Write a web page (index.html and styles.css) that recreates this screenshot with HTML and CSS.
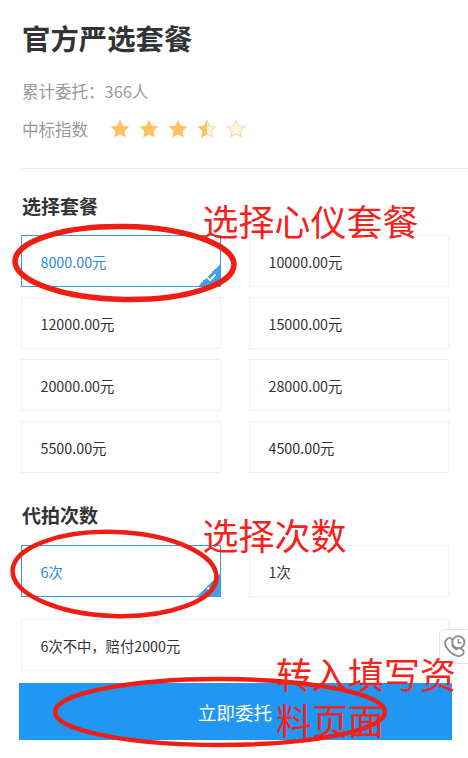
FILE: index.html
```html
<!DOCTYPE html>
<html lang="zh">
<head>
<meta charset="utf-8">
<title>官方严选套餐</title>
<link rel="stylesheet" href="styles.css">
</head>
<body>
<main class="page">
  <h1 class="title">官方严选套餐</h1>
  <p class="meta">累计委托：366人</p>
  <div class="rating">
    <span class="meta-label">中标指数</span>
    <span class="stars">
      <svg class="star" viewBox="0 0 20 20"><path class="star-full" d="M10 .8l2.9 6 6.4.8-4.7 4.5 1.2 6.5L10 15.4l-5.8 3.2 1.2-6.5L.7 7.6l6.4-.8z"/></svg>
      <svg class="star" viewBox="0 0 20 20"><path class="star-full" d="M10 .8l2.9 6 6.4.8-4.7 4.5 1.2 6.5L10 15.4l-5.8 3.2 1.2-6.5L.7 7.6l6.4-.8z"/></svg>
      <svg class="star" viewBox="0 0 20 20"><path class="star-full" d="M10 .8l2.9 6 6.4.8-4.7 4.5 1.2 6.5L10 15.4l-5.8 3.2 1.2-6.5L.7 7.6l6.4-.8z"/></svg>
      <svg class="star" viewBox="0 0 20 20"><path class="star-empty" d="M10 1.8l2.6 5.4 5.7.7-4.2 4 1.1 5.8L10 14.9l-5.2 2.8 1.1-5.8-4.2-4 5.7-.7z"/><path class="star-full" d="M10 .8v14.6l-5.8 3.2 1.2-6.5L.7 7.6l6.4-.8z"/></svg>
      <svg class="star" viewBox="0 0 20 20"><path class="star-empty" d="M10 1.8l2.6 5.4 5.7.7-4.2 4 1.1 5.8L10 14.9l-5.2 2.8 1.1-5.8-4.2-4 5.7-.7z"/></svg>
    </span>
  </div>
  <hr class="divider">
  <h2 class="section-title">选择套餐</h2>
  <div class="options">
    <div class="option selected">8000.00元<span class="corner"><svg viewBox="0 0 12 10"><path d="M1.5 5l3 3 6-6.5"/></svg></span></div>
    <div class="option">10000.00元</div>
    <div class="option">12000.00元</div>
    <div class="option">15000.00元</div>
    <div class="option">20000.00元</div>
    <div class="option">28000.00元</div>
    <div class="option">5500.00元</div>
    <div class="option">4500.00元</div>
  </div>
  <h2 class="section-title second">代拍次数</h2>
  <div class="options">
    <div class="option selected">6次<span class="corner"><svg viewBox="0 0 12 10"><path d="M1.5 5l3 3 6-6.5"/></svg></span></div>
    <div class="option">1次</div>
    <div class="option wide">6次不中，赔付2000元</div>
  </div>
  <button class="submit">立即委托</button>
</main>

<aside class="float-call">
  <svg viewBox="0 0 26 26"><path d="M5 5.5c2-2 4-2 5.500 0l1.500 2c1 1.300.8 2.300-.2 3.300l-1 1c.8 2 2.200 3.400 4.200 4.300l1-1c1-1 2.200-1.100 3.300-.2l2 1.500c2 1.600 1.600 3.700-.3 5.300-2 1.700-4.700 1.500-7.500.2C9.500 20 6.500 17 4.500 13.500 3 10.500 3 7.500 5 5.500z"/><circle cx="17" cy="8.500" r="6.300"/><path d="M17 5v4h3"/></svg>
</aside>

<svg class="rings" viewBox="0 0 468 758">
  <ellipse class="ring-thick" cx="124.500" cy="263" rx="109.500" ry="36.500" transform="rotate(1 124.500 263)"/>
  <ellipse cx="114.500" cy="574" rx="102" ry="42" transform="rotate(2 114.500 574)"/>
  <ellipse cx="220" cy="712" rx="165" ry="33"/>
</svg>
<div class="note note-plan">选择心仪套餐</div>
<div class="note note-count">选择次数</div>
<div class="note note-next">转入填写资<br>料页面</div>
</body>
</html>
```
FILE: styles.css
```css
* { box-sizing: border-box; }
html, body { margin: 0; padding: 0; }
body {
  position: relative;
  width: 468px;
  height: 758px;
  overflow: hidden;
  background: #fff;
  color: #333;
  font-family: "Noto Sans CJK SC", "Noto Sans", sans-serif;
}
.page {
  display: flex;
  flex-direction: column;
  padding: 17px 0 0 22px;
  height: 100%;
  border-left: 1px solid #f6f6f6;
  margin-left: -1px;
}
.title {
  margin: 0;
  font-size: 28.400px;
  line-height: 42px;
  font-weight: 700;
  color: #333;
}
.meta {
  margin: 20px 0 0;
  font-size: 16.500px;
  line-height: 24px;
  color: #999;
}
.rating {
  display: flex;
  align-items: center;
  margin-top: 14px;
  height: 24px;
  font-size: 16.500px;
  color: #999;
}
.stars { display: flex; gap: 9px; margin-left: 22px; }
.star { width: 20px; height: 20px; display: block; }
.star-full { fill: #fdc161; }
.star-empty { fill: #fbf5e6; stroke: #fbd99b; stroke-width: 1.100; }
.divider {
  width: 100%;
  margin: 27px 0 0;
  border: 0;
  border-top: 1px solid #ececec;
}
.section-title {
  margin: 23px 0 0;
  font-size: 19px;
  line-height: 27px;
  font-weight: 700;
  color: #333;
}
.section-title.second { margin-top: 28px; }
.options {
  display: grid;
  grid-template-columns: 200px 200px;
  column-gap: 28px;
  row-gap: 10px;
  margin: 16px 0 0 -1px;
}
.section-title.second + .options { margin-top: 17px; row-gap: 22px; }
.option {
  position: relative;
  display: flex;
  align-items: center;
  height: 52px;
  padding-left: 18.500px;
  border: 1px solid #f5ecef;
  font-size: 14.300px;
  color: #333;
  overflow: hidden;
}
.option.wide { grid-column: 1 / 3; }
.option.selected { border-color: #3f98d8; color: #2b8cd6; }
.corner {
  position: absolute;
  right: 0;
  bottom: 0;
  width: 22px;
  height: 22px;
  background: linear-gradient(135deg, transparent 50%, #43a0ea 50%);
}
.corner svg {
  position: absolute;
  right: 3px;
  bottom: 4px;
  width: 11px;
  height: 9px;
}
.corner path { fill: none; stroke: #fff; stroke-width: 2; }
.submit {
  display: block;
  width: 433px;
  height: 57px;
  margin: 12px 0 0 -3.500px;
  border: 0;
  border-radius: 0;
  background: #2196f3;
  color: #fff;
  font: inherit;
  font-size: 18.500px;
  padding: 0;
}
.float-call {
  position: absolute;
  left: 439px;
  top: 629px;
  width: 34px;
  height: 35px;
  display: flex;
  align-items: center;
  padding-left: 2px;
  background: #fff;
  border: 1px solid #e2e2e2;
  border-radius: 6px;
}
.float-call svg { width: 25px; height: 25px; }
.float-call path, .float-call circle { fill: #fff; stroke: #8c8c8c; stroke-width: 1.900; }
.float-call path:last-child { fill: none; stroke-width: 1.500; }
.rings {
  position: absolute;
  left: 0;
  top: 0;
  width: 468px;
  height: 758px;
  pointer-events: none;
}
.rings ellipse { fill: none; stroke: #f01d12; stroke-width: 4.500; }
.rings .ring-thick { stroke-width: 5.500; }
.note {
  position: absolute;
  font-size: 36px;
  line-height: 46px;
  color: #f5221c;
  white-space: nowrap;
}
.note-plan { left: 202.500px; top: 197px; }
.note-count { left: 202.500px; top: 511px; }
.note-next { left: 276px; top: 650px; }
```
